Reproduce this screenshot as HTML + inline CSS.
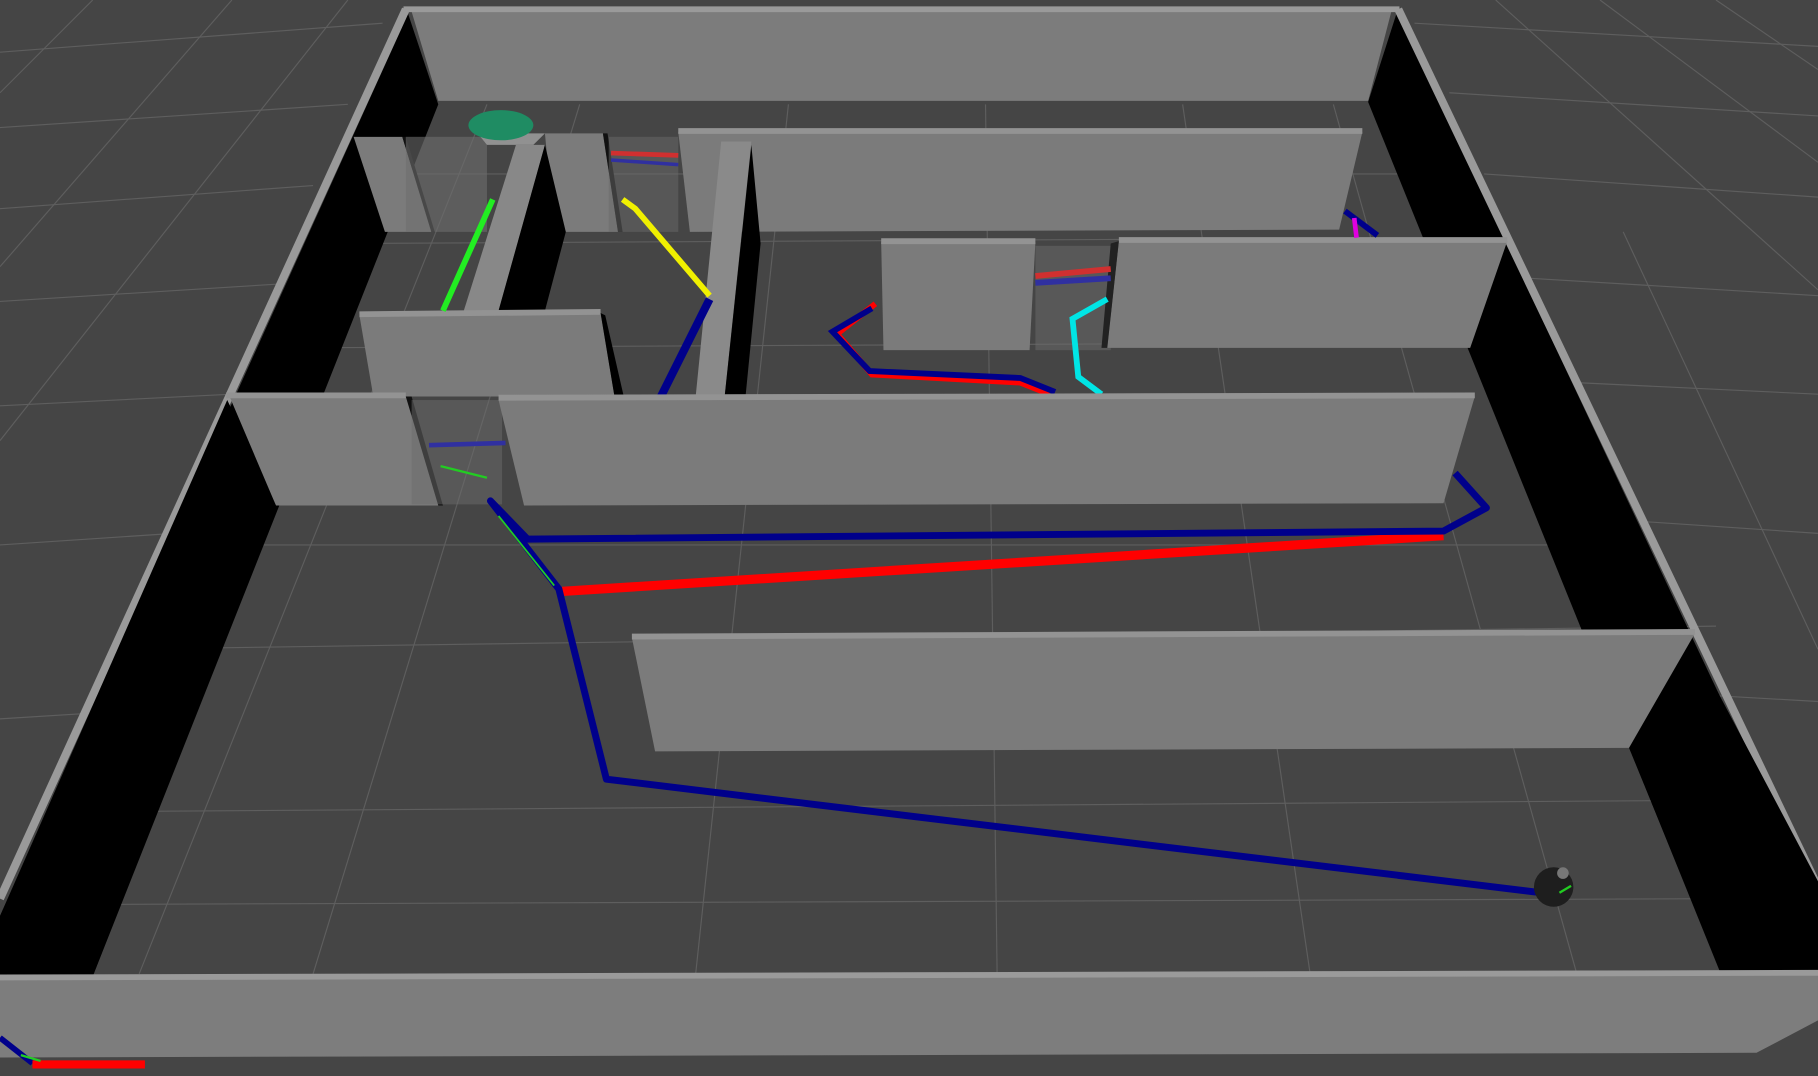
<!DOCTYPE html>
<html><head><meta charset="utf-8"><style>
html,body{margin:0;padding:0;background:#454545;overflow:hidden}
svg{display:block}
</style></head><body>
<svg width="1818" height="1076" viewBox="0 0 1568 928" preserveAspectRatio="none" xmlns="http://www.w3.org/2000/svg">
<rect width="1568" height="928" fill="#454545"/>
<g stroke="#5e5e5e" stroke-width="1" fill="none">
<line x1="0" y1="45" x2="330" y2="20"/><line x1="0" y1="110" x2="300" y2="90"/><line x1="0" y1="180" x2="270" y2="160"/>
<line x1="0" y1="260" x2="240" y2="245"/><line x1="0" y1="350" x2="200" y2="340"/><line x1="0" y1="470" x2="150" y2="460"/>
<line x1="0" y1="620" x2="80" y2="615"/>
<line x1="1220" y1="20" x2="1568" y2="40"/><line x1="1250" y1="80" x2="1568" y2="100"/><line x1="1280" y1="150" x2="1568" y2="170"/>
<line x1="1320" y1="240" x2="1568" y2="255"/><line x1="1360" y1="330" x2="1568" y2="340"/><line x1="1420" y1="450" x2="1568" y2="460"/>
<line x1="1480" y1="600" x2="1568" y2="605"/>
<line x1="80" y1="0" x2="0" y2="80"/><line x1="200" y1="0" x2="0" y2="230"/><line x1="300" y1="0" x2="0" y2="380"/>
<line x1="1290" y1="0" x2="1568" y2="250"/><line x1="1380" y1="0" x2="1568" y2="140"/><line x1="1480" y1="0" x2="1568" y2="60"/>
<line x1="1400" y1="200" x2="1568" y2="560"/>
<line x1="100" y1="560" x2="1480" y2="540"/><line x1="90" y1="700" x2="1500" y2="690"/><line x1="180" y1="470" x2="1400" y2="470"/>
<line x1="250" y1="300" x2="1300" y2="295"/><line x1="300" y1="210" x2="1250" y2="205"/><line x1="330" y1="150" x2="1220" y2="150"/>
<line x1="85" y1="780" x2="1510" y2="775"/>
<line x1="500" y1="90" x2="270" y2="840"/><line x1="680" y1="90" x2="600" y2="840"/><line x1="850" y1="90" x2="860" y2="840"/>
<line x1="1020" y1="90" x2="1130" y2="840"/><line x1="1150" y1="90" x2="1360" y2="840"/><line x1="420" y1="90" x2="120" y2="840"/>
</g>
<!-- outer walls -->
<polygon points="352,12 378,90 80,842 0,842 0,790" fill="#000"/>
<polygon points="1205,10 1568,780 1568,842 1485,842 1180,88" fill="#000"/>
<polygon points="355,10 1200,10 1180,87 378,87" fill="#7c7c7c"/>
<line x1="348" y1="8" x2="1207" y2="8" stroke="#9a9a9a" stroke-width="5"/>
<line x1="350" y1="8" x2="0" y2="775" stroke="#9a9a9a" stroke-width="7"/>
<line x1="1206" y1="8" x2="1568" y2="765" stroke="#9a9a9a" stroke-width="7"/>
<!-- upper small walls -->
<polygon points="305,118 347,118 372,200 332,200" fill="#7b7b7b"/>
<polygon points="347,118 372,200 375,200 350,118" fill="#111"/>
<rect x="350" y="118" width="70" height="82" fill="#6e6e6e" opacity="0.6"/>
<polygon points="470,115 520,115 533,200 478,200" fill="#7b7b7b"/>
<polygon points="520,115 533,200 537,200 524,115" fill="#111"/>
<rect x="525" y="118" width="60" height="82" fill="#6a6a6a" opacity="0.5"/>
<polygon points="412,115 470,115 460,125 420,125" fill="#919191"/>
<polygon points="445,125 470,125 430,268 400,268" fill="#888"/>
<polygon points="470,125 488,200 470,268 430,268" fill="#000"/>
<polygon points="585,114 1175,114 1155,198 595,200" fill="#7b7b7b"/>
<line x1="585" y1="113" x2="1175" y2="113" stroke="#939393" stroke-width="5"/>
<polygon points="622,122 648,122 625,342 600,342" fill="#8a8a8a"/>
<polygon points="648,125 656,210 643,342 625,342" fill="#000"/>
<!-- T horizontal -->
<polygon points="310,272 518,270 530,342 322,342" fill="#7b7b7b"/>
<line x1="310" y1="271" x2="518" y2="269" stroke="#939393" stroke-width="5"/>
<polygon points="518,270 530,342 538,342 522,272" fill="#000"/>
<!-- middle boxes -->
<polygon points="760,209 893,209 888,302 762,302" fill="#7b7b7b"/>
<line x1="760" y1="208" x2="893" y2="208" stroke="#939393" stroke-width="5"/>
<rect x="893" y="212" width="65" height="90" fill="#6b6b6b" opacity="0.5"/>
<polygon points="1300,222 1445,542 1365,542 1268,300" fill="#000"/>
<polygon points="965,208 1300,208 1268,300 955,300" fill="#7b7b7b"/>
<line x1="965" y1="207" x2="1300" y2="207" stroke="#939393" stroke-width="5"/>
<polygon points="958,210 965,208 955,300 950,300" fill="#222"/>
<!-- paths upper -->
<polyline points="755,262 722,288 752,323 880,330 905,340" fill="none" stroke="#f00" stroke-width="5"/>
<polyline points="752,266 718,286 750,320 880,326 910,338" fill="none" stroke="#00008b" stroke-width="5"/>
<polyline points="955,258 925,275 930,325 950,340" fill="none" stroke="#00e5e5" stroke-width="5"/>
<line x1="893" y1="238" x2="958" y2="232" stroke="#d03030" stroke-width="5"/>
<line x1="893" y1="244" x2="958" y2="240" stroke="#3030a0" stroke-width="5"/>
<line x1="527" y1="132" x2="585" y2="134" stroke="#d03030" stroke-width="4"/>
<line x1="527" y1="138" x2="585" y2="142" stroke="#3030a0" stroke-width="3"/>
<polyline points="537,172 548,180 612,255" fill="none" stroke="#f0f000" stroke-width="5"/>
<line x1="382" y1="268" x2="425" y2="172" stroke="#22ee22" stroke-width="5"/>
<line x1="570" y1="342" x2="612" y2="258" stroke="#00008b" stroke-width="7"/>
<polyline points="1160,182 1188,203" fill="none" stroke="#00008b" stroke-width="5"/>
<line x1="1168" y1="188" x2="1170" y2="205" stroke="#e000e0" stroke-width="4"/>
<ellipse cx="432" cy="108" rx="28" ry="13" fill="#1f8c63"/>
<!-- wall A -->
<polygon points="198,342 350,342 380,436 238,436" fill="#7b7b7b"/>
<line x1="195" y1="341" x2="350" y2="341" stroke="#939393" stroke-width="5"/>
<polygon points="350,342 355,342 382,436 378,436" fill="#111"/>
<polygon points="196,345 238,436 80,842 0,842 0,790" fill="#000"/>
<rect x="355" y="345" width="78" height="90" fill="#6c6c6c" opacity="0.5"/>
<line x1="370" y1="384" x2="436" y2="382" stroke="#3030a0" stroke-width="4"/>
<polygon points="430,345 1272,342 1245,434 452,436" fill="#7b7b7b"/>
<line x1="430" y1="343" x2="1272" y2="341" stroke="#939393" stroke-width="5"/>
<!-- wall B -->
<polygon points="1462,560 1568,760 1568,840 1485,840 1405,645" fill="#000"/>
<polygon points="545,550 1462,546 1405,645 565,648" fill="#7b7b7b"/>
<line x1="545" y1="549" x2="1462" y2="545" stroke="#939393" stroke-width="5"/>
<!-- lower paths -->
<polyline points="485,510 1245,462" fill="none" stroke="#f00" stroke-width="8"/>
<polyline points="1330,770 523,672 482,508 423,432 455,465 1245,458 1282,438 1255,408" fill="none" stroke="#00008b" stroke-width="6" stroke-linejoin="round"/>
<line x1="430" y1="445" x2="478" y2="505" stroke="#22cc22" stroke-width="1.5"/>
<line x1="380" y1="402" x2="420" y2="412" stroke="#22cc22" stroke-width="2"/>
<!-- robot -->
<circle cx="1340" cy="765" r="17" fill="#1e1e1e"/>
<circle cx="1348" cy="753" r="5" fill="#777"/>
<path d="M1345 770 l10 -6" stroke="#2c2" stroke-width="2"/>
<!-- bottom wall -->
<polygon points="0,844 1568,840 1568,880 1515,908 0,912" fill="#7d7d7d"/>
<line x1="0" y1="843" x2="1568" y2="839" stroke="#9a9a9a" stroke-width="5"/>
<!-- axis -->
<line x1="0" y1="895" x2="28" y2="917" stroke="#00008b" stroke-width="5"/>
<line x1="28" y1="918" x2="125" y2="918" stroke="#f00" stroke-width="7"/>
<line x1="18" y1="910" x2="35" y2="915" stroke="#2c2" stroke-width="2"/>
</svg>
</body></html>
